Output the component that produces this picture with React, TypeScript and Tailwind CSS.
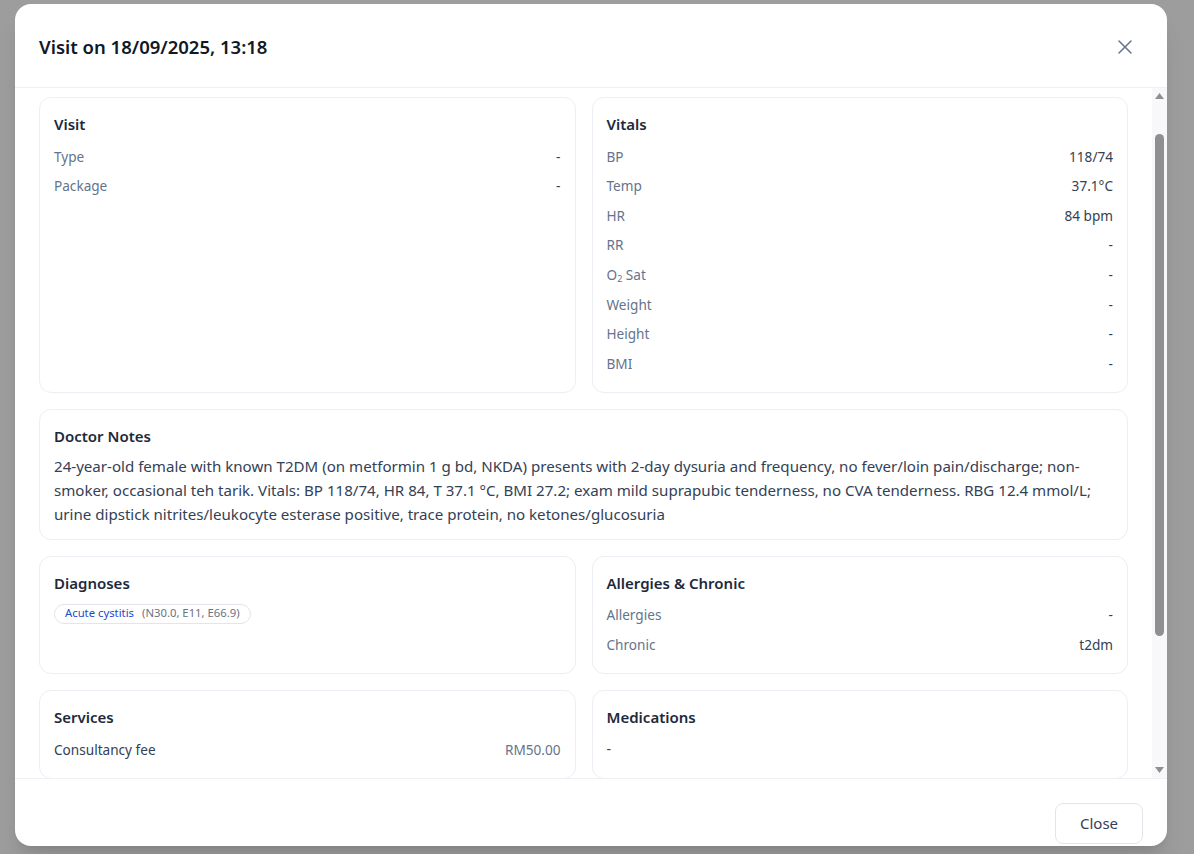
import React from "react";
import { X } from "lucide-react";

function Card({ title, children, className = "" }: { title: string; children?: React.ReactNode; className?: string }) {
  return (
    <div className={"rounded-xl border border-[#eceef3] bg-white px-3.5 pt-3.5 pb-[13px] " + className}>
      <div className="text-[15px] font-semibold leading-6 text-[#1e293b]">{title}</div>
      {children}
    </div>
  );
}

function Row({ label, value, labelDark = false }: { label: React.ReactNode; value: string; labelDark?: boolean }) {
  return (
    <div className="flex h-[29.6px] items-center justify-between text-[13.6px]">
      <span className={labelDark ? "text-[#334155]" : "text-[#64748b]"}>{label}</span>
      <span className={labelDark ? "text-[#64748b]" : "text-[#334155]"}>{value}</span>
    </div>
  );
}

export default function App() {
  return (
    <div className="h-[854px] w-[1194px] overflow-hidden bg-[#9d9d9d] pl-[15px] pt-1 font-['Noto_Sans',sans-serif]">
      <div className="flex h-[842px] w-[1152px] flex-col overflow-hidden rounded-2xl bg-white shadow-xl">
        {/* header */}
        <div className="flex h-[84px] shrink-0 items-center justify-between border-b border-[#eef0f3] pl-6 pr-[30px] pt-0.5">
          <h2 className="text-[18.5px] font-semibold leading-7 text-[#111827]">Visit on 18/09/2025, 13:18</h2>
          <X size={24} strokeWidth={1.5} className="text-[#64748b]" />
        </div>

        {/* body */}
        <div className="flex min-h-0 flex-1">
          <div className="flex-1 overflow-hidden px-6 pt-[9px]">
            <div className="grid grid-cols-2 gap-4">
              <Card title="Visit">
                <div className="mt-[6px]">
                  <Row label="Type" value="-" />
                  <Row label="Package" value="-" />
                </div>
              </Card>
              <Card title="Vitals">
                <div className="mt-[6px]">
                  <Row label="BP" value="118/74" />
                  <Row label="Temp" value="37.1°C" />
                  <Row label="HR" value="84 bpm" />
                  <Row label="RR" value="-" />
                  <Row label={<span>O<sub className="text-[9px]">2</sub> Sat</span>} value="-" />
                  <Row label="Weight" value="-" />
                  <Row label="Height" value="-" />
                  <Row label="BMI" value="-" />
                </div>
              </Card>
              <Card title="Doctor Notes" className="col-span-2">
                <p className="mt-1.5 text-[15.1px] leading-6 text-[#334155]">
                  24-year-old female with known T2DM (on metformin 1 g bd, NKDA) presents with 2-day dysuria and frequency, no fever/loin pain/discharge; non-smoker, occasional teh tarik. Vitals: BP 118/74, HR 84, T 37.1 °C, BMI 27.2; exam mild suprapubic tenderness, no CVA tenderness. RBG 12.4 mmol/L; urine dipstick nitrites/leukocyte esterase positive, trace protein, no ketones/glucosuria
                </p>
              </Card>
              <Card title="Diagnoses">
                <div className="mt-[9px] flex flex-wrap gap-2">
                  <span className="inline-flex h-[20px] items-center gap-2 rounded-full border border-[#e2e5ea] px-2.5 text-[11.3px]">
                    <span className="text-[#2948c8]">Acute cystitis</span>
                    <span className="text-[#6b7280]">(N30.0, E11, E66.9)</span>
                  </span>
                </div>
              </Card>
              <Card title="Allergies & Chronic">
                <div className="mt-[6px]">
                  <Row label="Allergies" value="-" />
                  <Row label="Chronic" value="t2dm" />
                </div>
              </Card>
              <Card title="Services">
                <div className="mt-[6px]">
                  <Row label="Consultancy fee" value="RM50.00" labelDark />
                </div>
              </Card>
              <Card title="Medications">
                <div className="mt-[5px] flex h-[29.6px] items-center text-sm text-[#334155]">-</div>
              </Card>
            </div>
          </div>
          {/* scrollbar */}
          <div className="flex w-[15px] shrink-0 flex-col items-center bg-[#f8f8fa] pt-[5px] pb-[5px]">
            <svg width="9" height="6" viewBox="0 0 9 6"><path d="M4.5 0 L9 6 L0 6 Z" fill="#8f8f8f" /></svg>
            <div className="mt-[35px] h-[502px] w-[9px] rounded-full bg-[#8f8f8f]" />
            <div className="flex-1" />
            <svg width="9" height="6" viewBox="0 0 9 6"><path d="M0 0 L9 0 L4.5 6 Z" fill="#8f8f8f" /></svg>
          </div>
        </div>

        {/* footer */}
        <div className="flex h-[68px] shrink-0 items-start justify-end border-t border-[#eef0f3] px-6 pt-6">
          <button className="h-[41px] w-[88px] rounded-lg border border-[#e2e5ea] bg-white text-[15px] text-[#334155]">Close</button>
        </div>
      </div>
    </div>
  );
}
